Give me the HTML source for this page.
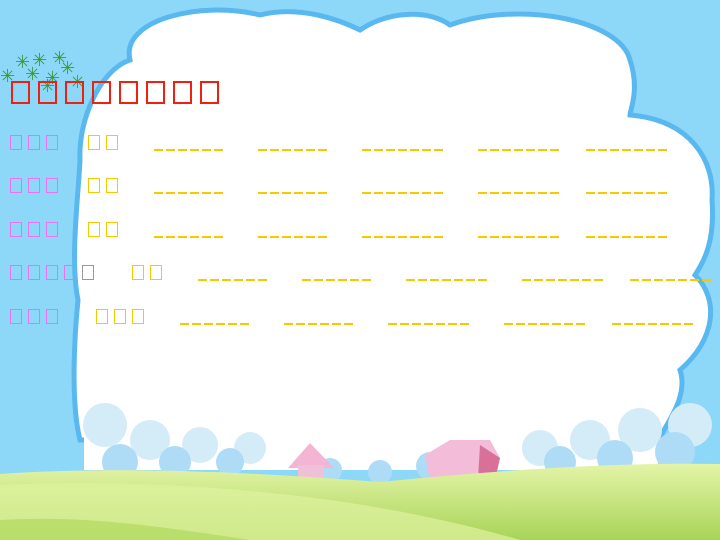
<!DOCTYPE html><html><head><meta charset="utf-8"><style>
body{margin:0;width:720px;height:540px;overflow:hidden;background:#8dd8f8;position:relative;font-family:"Liberation Sans",sans-serif}
.b{position:absolute;border:2px solid;box-sizing:border-box}
.r{border-color:#f02010;width:19px;height:23px;top:81px}
.p{border-color:#f070f0;width:12px;height:15px;border-width:1.5px}
.y{border-color:#f8c800;width:12px;height:15px;border-width:1.5px}
.g{border-color:#999;width:12px;height:15px;border-width:1.5px}
.d{position:absolute;height:2px;background:repeating-linear-gradient(90deg,#f8c800 0 9px,transparent 9px 12px)}
</style></head><body>
<svg width="720" height="540" style="position:absolute;left:0;top:0">
<defs><linearGradient id="h" x1="0" y1="0" x2="0" y2="1"><stop offset="0" stop-color="#e4f4a8"/><stop offset="1" stop-color="#a8d458"/></linearGradient></defs>
<path d="M130,60 C120,20 200,0 260,15 C300,5 340,20 360,30 C390,10 430,10 450,25 C520,0 620,20 630,60 C640,90 630,110 630,115 C690,120 715,160 712,200 C715,240 705,260 695,275 C720,300 715,340 680,370 C690,400 660,430 660,440 L80,440 C70,400 75,330 78,300 C70,260 78,200 80,160 C78,120 100,70 130,60Z" fill="#fff" stroke="#5ab8f0" stroke-width="5"/>
<rect x="84" y="400" width="574" height="70" fill="#fff"/>
<g fill="#d4ecf8"><circle cx="105" cy="425" r="22"/><circle cx="150" cy="440" r="20"/><circle cx="200" cy="445" r="18"/><circle cx="250" cy="448" r="16"/><circle cx="540" cy="448" r="18"/><circle cx="590" cy="440" r="20"/><circle cx="640" cy="430" r="22"/><circle cx="690" cy="425" r="22"/></g>
<g fill="#aedcf6"><circle cx="120" cy="462" r="18"/><circle cx="175" cy="462" r="16"/><circle cx="230" cy="462" r="14"/><circle cx="330" cy="470" r="12"/><circle cx="380" cy="472" r="12"/><circle cx="430" cy="466" r="14"/><circle cx="560" cy="462" r="16"/><circle cx="615" cy="458" r="18"/><circle cx="675" cy="452" r="20"/></g>
<path d="M288,468 L310,443 L334,468Z" fill="#f4b5d5"/><rect x="298" y="465" width="26" height="15" fill="#f0c0d8"/>
<path d="M425,455 L450,440 L490,440 L500,458 L495,480 L430,480Z" fill="#f3bcd8"/><path d="M480,445 L500,458 L495,480 L478,480Z" fill="#d8709a"/>
<path d="M0,474 C120,466 250,472 380,482 C500,470 620,462 720,464 L720,540 L0,540Z" fill="url(#h)"/>
<path d="M0,485 C150,478 350,490 520,540 L0,540Z" fill="#e0f2a0" opacity="0.7"/>
<path d="M0,520 C80,515 150,525 250,540 L0,540Z" fill="#b0d860" opacity="0.7"/>
<g fill="#3a9a3a" font-size="18" font-family="DejaVu Sans"><text x="15" y="68">✳</text><text x="32" y="66">✳</text><text x="52" y="64">✳</text><text x="25" y="80">✳</text><text x="45" y="84">✳</text><text x="0" y="82">✳</text><text x="60" y="74">✳</text><text x="70" y="88">✳</text><text x="40" y="92">✳</text></g>
</svg>
<span class="b r" style="left:11px"></span><span class="b r" style="left:38px"></span><span class="b r" style="left:65px"></span><span class="b r" style="left:92px"></span><span class="b r" style="left:119px"></span><span class="b r" style="left:146px"></span><span class="b r" style="left:173px"></span><span class="b r" style="left:200px"></span>

<span class="b p" style="left:10px;top:135px"></span><span class="b p" style="left:28px;top:135px"></span><span class="b p" style="left:46px;top:135px"></span><span class="b y" style="left:88px;top:135px"></span><span class="b y" style="left:106px;top:135px"></span>
<span class="b p" style="left:10px;top:178px"></span><span class="b p" style="left:28px;top:178px"></span><span class="b p" style="left:46px;top:178px"></span><span class="b y" style="left:88px;top:178px"></span><span class="b y" style="left:106px;top:178px"></span>
<span class="b p" style="left:10px;top:222px"></span><span class="b p" style="left:28px;top:222px"></span><span class="b p" style="left:46px;top:222px"></span><span class="b y" style="left:88px;top:222px"></span><span class="b y" style="left:106px;top:222px"></span>
<span class="b p" style="left:10px;top:265px"></span><span class="b p" style="left:28px;top:265px"></span><span class="b p" style="left:46px;top:265px"></span><span class="b p" style="left:64px;top:265px"></span><span class="b g" style="left:82px;top:265px"></span><span class="b y" style="left:132px;top:265px"></span><span class="b y" style="left:150px;top:265px"></span>
<span class="b p" style="left:10px;top:309px"></span><span class="b p" style="left:28px;top:309px"></span><span class="b p" style="left:46px;top:309px"></span><span class="b y" style="left:96px;top:309px"></span><span class="b y" style="left:114px;top:309px"></span><span class="b y" style="left:132px;top:309px"></span>

<div class="d" style="left:154px;top:149px;width:70px"></div><div class="d" style="left:258px;top:149px;width:70px"></div><div class="d" style="left:362px;top:149px;width:82px"></div><div class="d" style="left:478px;top:149px;width:82px"></div><div class="d" style="left:586px;top:149px;width:82px"></div>
<div class="d" style="left:154px;top:192px;width:70px"></div><div class="d" style="left:258px;top:192px;width:70px"></div><div class="d" style="left:362px;top:192px;width:82px"></div><div class="d" style="left:478px;top:192px;width:82px"></div><div class="d" style="left:586px;top:192px;width:82px"></div>
<div class="d" style="left:154px;top:236px;width:70px"></div><div class="d" style="left:258px;top:236px;width:70px"></div><div class="d" style="left:362px;top:236px;width:82px"></div><div class="d" style="left:478px;top:236px;width:82px"></div><div class="d" style="left:586px;top:236px;width:82px"></div>
<div class="d" style="left:198px;top:279px;width:70px"></div><div class="d" style="left:302px;top:279px;width:70px"></div><div class="d" style="left:406px;top:279px;width:82px"></div><div class="d" style="left:522px;top:279px;width:82px"></div><div class="d" style="left:630px;top:279px;width:82px"></div>
<div class="d" style="left:180px;top:323px;width:70px"></div><div class="d" style="left:284px;top:323px;width:70px"></div><div class="d" style="left:388px;top:323px;width:82px"></div><div class="d" style="left:504px;top:323px;width:82px"></div><div class="d" style="left:612px;top:323px;width:82px"></div>
</body></html>
